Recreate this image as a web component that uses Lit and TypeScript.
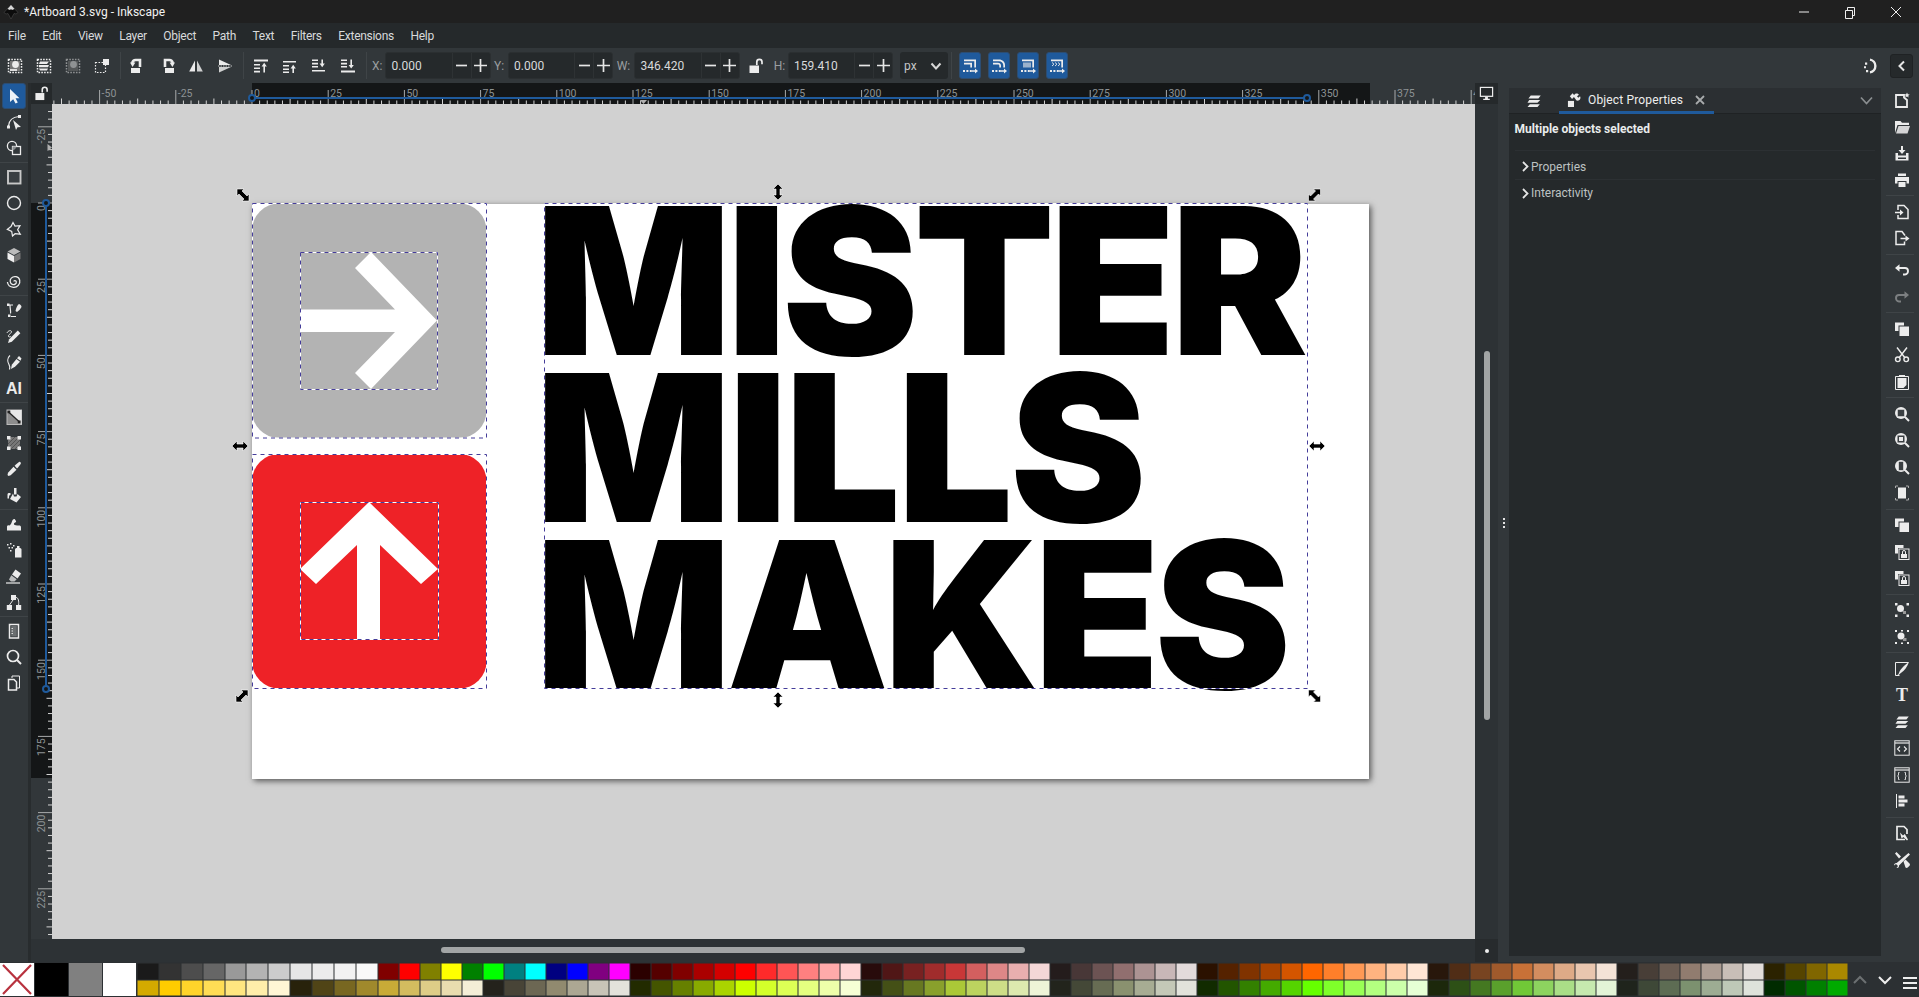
import { LitElement, html, css, svg } from "lit";
import { customElement } from "lit/decorators.js";

const dashBox = svg`<rect x="1.5" y="1.5" width="13" height="13" fill="none" stroke="currentColor" stroke-width="1.5" stroke-dasharray="1.6 1.2"/>`;

const ICONS: Record<string, unknown> = {
  selAll: svg`${dashBox}<rect x="3" y="3" width="10" height="10" fill="#777"/><circle cx="8.5" cy="6.5" r="3.4" fill="currentColor"/><path d="M3 11h7v2H3z" fill="#ddd"/>`,
  selLayers: svg`${dashBox}<path d="M4 3.5h9l-2 2.4H3zM3 7h10l-1 2.2H3zM3 10.4h9l-1 2.1H4z" fill="currentColor"/>`,
  deselect: svg`<g opacity=".5">${dashBox}<rect x="3" y="3" width="10" height="10" fill="#777"/><circle cx="8.5" cy="6.5" r="3.4" fill="currentColor"/></g>`,
  selSame: svg`<rect x="1.5" y="4.5" width="10" height="10" fill="none" stroke="currentColor" stroke-width="1.2" stroke-dasharray="1.6 1.4"/><rect x="9" y="1" width="6" height="6" fill="currentColor"/>`,
  rotL: svg`<path d="M1 10h9v5H1z" fill="currentColor"/><path d="M10 9V2H5.6C3.8 2 2.6 3.3 2.2 5" fill="none" stroke="currentColor" stroke-width="2.6"/><path d="M0 4.6h5.4L2.6 9z" fill="currentColor"/>`,
  rotR: svg`<path d="M6 10h9v5H6z" fill="currentColor"/><path d="M6 9V2h4.4c1.8 0 3 1.3 3.4 3" fill="none" stroke="currentColor" stroke-width="2.6"/><path d="M16 4.6h-5.4L13.4 9z" fill="currentColor"/>`,
  flipH: svg`<path d="M7 2.5v11H1.2z" fill="currentColor"/><path d="M9 2.5v11h5.8z" fill="currentColor" opacity=".85"/><path d="M8 0v16" stroke="#32373a" stroke-width=".8"/>`,
  flipV: svg`<path d="M2 1.5l12 5.5H2z" fill="currentColor"/><path d="M2 9h12L2 14.5z" fill="currentColor" opacity=".85"/><path d="M1 8h14" stroke="currentColor" stroke-width=".8" stroke-dasharray="1.5 1"/>`,
  raiseTop: svg`<path d="M1 1.5h14v2H1z" fill="currentColor"/><path d="M1 6h6v1.6H1zM1 9.4h6V11H1zM1 12.8h6v1.6H1z" fill="currentColor"/><path d="M11.2 14.5V7.5" stroke="currentColor" stroke-width="1.6"/><path d="M8.6 8.4l2.6-3.6 2.6 3.6z" fill="currentColor"/>`,
  raise: svg`<path d="M1 3h13v1.6H1zM1 7h6v1.6H1zM1 10.4h6V12H1zM1 13.4h6V15H1z" fill="currentColor"/><path d="M11.2 15V9.5" stroke="currentColor" stroke-width="1.6"/><path d="M8.6 10.4l2.6-3.6 2.6 3.6z" fill="currentColor"/>`,
  lower: svg`<path d="M1 1.5h6v1.6H1zM1 4.8h6v1.6H1zM1 8h6v1.6H1zM1 12h13v1.6H1z" fill="currentColor"/><path d="M11.2 1.5v5" stroke="currentColor" stroke-width="1.6"/><path d="M8.6 5.6l2.6 3.6 2.6-3.6z" fill="currentColor"/>`,
  lowerBot: svg`<path d="M1 1.5h6v1.6H1zM1 4.8h6v1.6H1zM1 8h6v1.6H1zM1 12.6h14v2H1z" fill="currentColor"/><path d="M11.2 1.5v6" stroke="currentColor" stroke-width="1.6"/><path d="M8.6 7l2.6 3.6L13.8 7z" fill="currentColor"/>`,
  lockOpen: svg`<path d="M1.5 7.5h9.5V15H1.5z" fill="currentColor"/><path d="M8.8 7V4a2.6 2.6 0 0 1 5.2 0v2.2" fill="none" stroke="currentColor" stroke-width="1.7"/>`,
  b1: svg`<path d="M2 1.500h12v8h-1.700V3.200H2zM2 4.800h8v4.700H8.300V6.500H2z" fill="currentColor"/><path d="M1 13h2M4.400 13h2M7.800 13h2" stroke="currentColor" stroke-width="1.800"/><path d="M10 12.200h3V10.400l3 2.600-3 2.600v-1.800h-3z" fill="currentColor"/>`,
  b2: svg`<path d="M2 1.500h6c3.500 0 6 2.400 6 5.500v2.500h-1.700V7.200c0-2.200-1.800-4-4.300-4H2zM2 4.800h5c1.800 0 3 1.200 3 2.800v1.900H8.300V7.800c0-.8-.6-1.300-1.300-1.300H2z" fill="currentColor"/><path d="M1 13h2M4.400 13h2M7.800 13h2" stroke="currentColor" stroke-width="1.800"/><path d="M10 12.200h3V10.400l3 2.600-3 2.600v-1.800h-3z" fill="currentColor"/>`,
  b3: svg`<path d="M2 1.500h12v8h-1.700V3.200H2z" fill="currentColor"/><path d="M3 4.500h8V9.500H3z" fill="currentColor" opacity=".6"/><path d="M1 13h2M4.400 13h2M7.800 13h2" stroke="currentColor" stroke-width="1.800"/><path d="M10 12.200h3V10.400l3 2.600-3 2.600v-1.800h-3z" fill="currentColor"/>`,
  b4: svg`<path d="M2 1.500h12v8h-1.700V3.200H2z" fill="currentColor"/><path d="M3 4.500l2 1.700L3 8M6 4.500l2 1.700L6 8M9 4.500l2 1.700L9 8" fill="none" stroke="currentColor" stroke-width=".9"/><path d="M1 13h2M4.400 13h2M7.800 13h2" stroke="currentColor" stroke-width="1.800"/><path d="M10 12.200h3V10.400l3 2.600-3 2.600v-1.800h-3z" fill="currentColor"/>`,
  snap: svg`<path d="M7 1.600A6.500 6.500 0 0 1 7 14.400" fill="none" stroke="currentColor" stroke-width="2.400"/><path d="M2 4.500h2.200v2.200H2zM1 8.300h2v2H1zM3 12h2.200v2.200H3z" fill="currentColor"/>`,
  monitor: svg`<rect x="1.500" y="1.500" width="13" height="9.500" fill="none" stroke="currentColor" stroke-width="1.300"/><path d="M6.500 11.500h3v2h-3zM4.500 13.500h7V15h-7z" fill="currentColor"/>`,
  xml: svg`<path d="M4 2.500h10L12 5.500H2zM3 7h11l-2.500 2.800H1.500zM4 11.200h10L12 14H2z" fill="currentColor" transform="skewX(-6) translate(1 0)"/>`,
  wrench: svg`<path d="M1 9.500h6.500V16H1z" fill="currentColor"/><path d="M3 4.500L6 1.400l1.500 1.800 1.400-1.300c1.500-.6 3-.1 3.800 1l-2 1.700 1.300 1.500 1.900-1.700c.8 1.300.5 3-.6 4-1 .9-2.100 1-3.200.7L7.400 5.400 5.400 7.400z" fill="currentColor"/>`,
  node: svg`<path d="M2.500 12C3 6 6 3 13 2.500" fill="none" stroke="currentColor" stroke-width="1.200"/><path d="M1 11.500h3v3H1zM12 1h3v3h-3z" fill="currentColor"/><path d="M7 6l8 7-3.500.2L10 16z" fill="currentColor"/>`,
  tweak: svg`<circle cx="6" cy="6" r="4.600" fill="none" stroke="currentColor" stroke-width="1.300"/><rect x="6.500" y="6.500" width="8" height="8" fill="#32373a" stroke="currentColor" stroke-width="1.300"/><path d="M6.500 6.500h3.800A4.500 4.500 0 0 1 6.500 10.300z" fill="#8a8d8f"/>`,
  rect: svg`<rect x="2" y="2" width="12.500" height="12.500" fill="#3a3f42" stroke="#c8c8c8" stroke-width="1.900"/>`,
  ellipse: svg`<circle cx="8" cy="8" r="6.500" fill="none" stroke="currentColor" stroke-width="1.400"/>`,
  star: svg`<path d="M7 1.500l2 3.600 5-.5-2.400 4.200 2.700 4.400-5.200-.5L6.500 15 5.700 10.500 1.300 8.300 5 5.500z" fill="none" stroke="currentColor" stroke-width="1.200"/>`,
  box: svg`<path d="M8 1L1.500 4.500 8 8l6.500-3.500z" fill="#bbb"/><path d="M1.500 5.500V12L8 15.500V9z" fill="#eee"/><path d="M14.500 5.500V12L8 15.500V9z" fill="#777"/>`,
  spiral: svg`<path d="M8 8.500c0-1.200 2-1.200 2.300.3.300 2-2 3.400-4 2.500-2.500-1-2.800-4.400-1-6.200 2.500-2.600 7.500-1.800 8.400 2 .9 4-2.500 7.500-6.300 7.200-3-.2-5.600-2.300-6-5.300" fill="none" stroke="currentColor" stroke-width="1.300"/>`,
  bezierBrush: svg`<path d="M2 3h5M4 3c0 4 1 6 .5 8.500" fill="none" stroke="currentColor" stroke-width="1.200"/><path d="M1 1.500h2.500V4H1zM2 12.500h2.500V15H2zM5 15h5v-1H5z" fill="currentColor"/><path d="M9.500 9c.5-3 2-6 3.500-7 1.500.5 2.500 1.800 2.500 3-1 2-3 4-4.500 5z" fill="currentColor"/>`,
  pencil: svg`<path d="M2 15l1.200-3.800L11.800 2.600l2.600 2.600-8.600 8.600z" fill="currentColor"/><path d="M1 5c1-2.500 4-3 4.500-1.500S1.500 7 2.500 8.500c.6.8 2 .3 2.500 0" fill="none" stroke="currentColor" stroke-width="1"/>`,
  pen: svg`<path d="M5 15l.8-4.300L10.500 5l3.500 2.800-5 5z" fill="currentColor"/><path d="M11 4.200L13 2l2.500 2.500-1 2.300z" fill="currentColor"/><path d="M4 1.500C1 4 1.500 8 3 10.500c1 1.800 1 3.500.5 5" fill="none" stroke="currentColor" stroke-width="1.200"/>`,
  gradient: svg`<rect x="1" y="1" width="14.500" height="14.500" fill="#8d8d8d" stroke="#bbb"/><path d="M1 1h14.500v14.500z" fill="#e8e8e8"/><path d="M2.500 3l11 10" stroke="#222" stroke-width="1.300"/><path d="M1.500 1.500h2.800v2.800H1.500zM11.800 11.500h2.800v2.800h-2.800z" fill="#222"/>`,
  mesh: svg`<rect x="2" y="2" width="12" height="12" fill="#777"/><path d="M2 5l3-3M2 9l7-7M2 13L13 2M5 14l9-9M9 14l5-5" stroke="#555" stroke-width="1"/><path d="M1 1h3.500v3.500H1zM11.500 1H15v3.500h-3.500zM1 11.500h3.500V15H1zM11.500 11.500H15V15h-3.500z" fill="currentColor"/>`,
  picker: svg`<path d="M2.500 15l-1-1 .5-2.200 5.500-6 3 3-5.800 5.500z" fill="currentColor"/><path d="M8.600 4.700l1-1L13 1c1-.6 2.400.8 1.700 2l-2.700 3.400-1 1z" fill="currentColor"/>`,
  bucket: svg`<path d="M8 1h2.500v6.500H8z" fill="currentColor"/><path d="M7 6.500l1 3h2.500l1-2.500 3.500 3-4.500 5.500L4 12zM1.500 7.500c0-1.500 1.500-1.800 3-1.500v2c-1.500-.2-1.500 1.500-1.500 3.500H1.500z" fill="currentColor"/>`,
  smudge: svg`<path d="M1 14.500V11c0-1 .5-2 2-1.500.8.300 2-1 2.800-3.500C6.500 3.500 8 2.500 9 3.500l1 1.500c.5.800-.5 1.300-1.300 1.700-1 .6-1.200 1.800 0 2.400 1.300.7 3 .4 4.300.4 1.300 0 2 .5 2 2v3z" fill="currentColor"/>`,
  spray: svg`<path d="M9 7.500c0-1 1-1.500 2-1.500V4h2.500v2c1 0 2 .5 2 1.500V15.500H9z" fill="currentColor"/><path d="M1 2h1.500v1.500H1zM4 1h1.500v1.500H4zM7 3h1.500v1.500H7zM2.500 5h1.500v1.500H2.500zM5.500 5h1.500v1.500H5.500zM4 8h1.500v1.500H4z" fill="currentColor"/>`,
  eraser: svg`<path d="M9.500 1.500l5.500 4-3.500 5-5.500-4z" fill="currentColor"/><path d="M5.300 7.200l5.400 4L8.500 13.500H5L3 11.500z" fill="currentColor" opacity=".75"/><path d="M0 15h14" stroke="currentColor" stroke-width="1.200"/>`,
  connector: svg`<path d="M5 1h5v5H5zM.8 11h5.200v5H.8zM10 11h5.200v5H10z" fill="currentColor"/><path d="M7 6L3.500 11M10 3.500c2.500 0 3 4 2.600 7.500" fill="none" stroke="currentColor" stroke-width="1"/>`,
  lpe: svg`<path d="M3.500 1.500h9v13.500h-9z" fill="none" stroke="currentColor" stroke-width="1.500"/><path d="M5.200 3h5.600v10.500H5.200z" fill="#6a6e70"/><path d="M5.500 5.500h1.500M5.500 8h1.500M5.500 10.500h1.500" stroke="#ddd"/>`,
  zoom: svg`<circle cx="7" cy="7" r="5.500" fill="none" stroke="currentColor" stroke-width="1.700"/><path d="M11 11l4 4" stroke="currentColor" stroke-width="2"/>`,
  pages: svg`<path d="M6 3V1h7.500v12H11" fill="none" stroke="currentColor" stroke-width="1"/><path d="M2.500 4.500H8l2.500 2.500V15h-8z" fill="none" stroke="currentColor" stroke-width="1.500"/>`,
  newdoc: svg`<path d="M2 3h8v2.500L13 8v7H2z" fill="none" stroke="currentColor" stroke-width="1.800"/><path d="M13 .5l.8 1.800 1.900.2-1.500 1.200.5 1.900-1.700-1-1.700 1 .5-1.900-1.500-1.200 1.900-.2z" fill="currentColor"/>`,
  open: svg`<path d="M1 2h5.500l1.500 1.800h7V6H3.500L1 14z" fill="currentColor"/><path d="M4.500 7H16l-2.500 7.500H2z" fill="currentColor" opacity=".88"/>`,
  save: svg`<path d="M7 1h2v4h2.500L8 9 4.500 5H7z" fill="currentColor"/><path d="M1.500 8H4v2.500h8V8h2.500v7.500h-13zM4 12.500h8V14H4z" fill="currentColor" fill-rule="evenodd"/>`,
  print: svg`<path d="M4 1.500h8V4H4zM1 5h14v6.500h-2.500V9h-9v2.500H1zM4.500 10h7v5h-7z" fill="currentColor"/>`,
  importDoc: svg`<path d="M4 6V1.500h6l4 4v9H4V11" fill="none" stroke="currentColor" stroke-width="1.500"/><path d="M1 7.800h5V5.500l3.500 3-3.500 3V9.200H1z" fill="currentColor"/>`,
  exportDoc: svg`<path d="M11 5.500L8 1.500H2v13h8.500v-3" fill="none" stroke="currentColor" stroke-width="1.500"/><path d="M6.500 7.800h5V5.500l4 3-4 3V9.200h-5z" fill="currentColor"/>`,
  undo: svg`<path d="M5 6h6c2.200 0 3 1.500 3 3s-.8 3.500-3 3.500H9" fill="none" stroke="currentColor" stroke-width="1.900"/><path d="M1 6l4.500-3.800v7.600z" fill="currentColor"/>`,
  redo: svg`<path d="M11 6H5C2.800 6 2 7.500 2 9s.8 3.500 3 3.500h2" fill="none" stroke="currentColor" stroke-width="1.900"/><path d="M15 6l-4.500-3.800v7.600z" fill="currentColor"/>`,
  dup: svg`<path d="M1 1.500h9v3H4.500V10H1z" fill="currentColor"/><path d="M5.500 5.500H15V15H5.500z" fill="currentColor"/>`,
  cut: svg`<circle cx="3.800" cy="12.300" r="2.300" fill="none" stroke="currentColor" stroke-width="1.400"/><circle cx="12.200" cy="12.300" r="2.300" fill="none" stroke="currentColor" stroke-width="1.400"/><path d="M3 .5l7.700 10M13 .5L5.300 10.500" stroke="currentColor" stroke-width="1.400"/>`,
  paste: svg`<path d="M1.500 2.500h13v13h-13z" fill="none" stroke="currentColor" stroke-width="1"/><path d="M5 1h6v2H5z" fill="currentColor"/><path d="M3.500 4h9v7l-3 3h-6z" fill="currentColor"/>`,
  zoomSel: svg`<circle cx="7" cy="7" r="6" fill="currentColor"/><rect x="3.500" y="3.500" width="7" height="7" fill="#3a3f42" stroke="currentColor" stroke-dasharray="1 1"/><path d="M11 11l4 4" stroke="currentColor" stroke-width="2"/>`,
  zoomDraw: svg`<circle cx="7" cy="7" r="6" fill="currentColor"/><rect x="3.500" y="3.500" width="7" height="7" fill="#3a3f42"/><rect x="5" y="5" width="4" height="4" fill="currentColor"/><path d="M11 11l4 4" stroke="currentColor" stroke-width="2"/>`,
  zoomPage: svg`<circle cx="7" cy="7" r="6" fill="currentColor"/><rect x="4.500" y="2.500" width="5" height="9" fill="#3a3f42" stroke="#eee" stroke-width=".6"/><path d="M11 11l4 4" stroke="currentColor" stroke-width="2"/>`,
  center: svg`<path d="M4 2.500h8V13.500H4z" fill="currentColor"/><path d="M1.500 3V1H4M12 1h2.500v2M1.500 13v2H4M12 15h2.500v-2" fill="none" stroke="#aaa" stroke-width="1"/>`,
  lockDup: svg`<path d="M1 1h8.500v3H4v5.500H1z" fill="currentColor"/><rect x="5" y="5" width="10" height="10.500" fill="none" stroke="currentColor" stroke-width="1"/><path d="M7 10h6v4H7z" fill="currentColor"/><path d="M8.500 10V8a1.500 1.500 0 0 1 3 0v2" fill="none" stroke="currentColor"/>`,
  group: svg`<path d="M1 1h2.500v2.500H1zM12.500 1H15v2.500h-2.500zM1 12.500h2.500V15H1zM12.500 12.500H15V15h-2.500z" fill="currentColor"/><circle cx="6.500" cy="6.500" r="3.500" fill="currentColor"/><path d="M9 9l3 0 0 3-3 0z" fill="#999"/>`,
  ungroup: svg`<path d="M1 1h2v2H1zM13 1h2v2h-2zM1 13h2v2H1zM13 13h2v2h-2zM7 1h2v1.500H7zM7 13.500h2V15H7z" fill="currentColor"/><circle cx="7" cy="7" r="3.500" fill="currentColor"/><path d="M9 9l3.500 0 0 3H9z" fill="#999"/>`,
  fill: svg`<path d="M1.500 1.500h13M1.500 1.500v13h4" fill="none" stroke="currentColor" stroke-width="1"/><path d="M5 12c1-3 4-7 10-11-2 5-4.500 8.500-7.500 10.500-1.500 1-2 2.500-5 3 1.500-.8 2-1.500 2.500-2.500z" fill="currentColor"/>`,
  text: svg`<text x="8" y="14" text-anchor="middle" font-family="Liberation Serif" font-weight="700" font-size="18" fill="currentColor">T</text>`,
  xmlEd: svg`<rect x=".8" y=".8" width="14.400" height="14.400" fill="none" stroke="currentColor" stroke-width="1"/><path d="M1 3h14" stroke="currentColor" stroke-width="1.200"/><path d="M6 6.500L3.500 9 6 11.500M10 6.500L12.500 9 10 11.500" fill="none" stroke="currentColor" stroke-width="1.100"/>`,
  css: svg`<rect x=".8" y=".8" width="14.400" height="14.400" fill="none" stroke="currentColor" stroke-width="1"/><path d="M1 3h14" stroke="currentColor" stroke-width="1.200"/><path d="M5.500 5.500h-1v2.800l-1 .7 1 .7v2.800h1M10.500 5.500h1v2.800l1 .7-1 .7v2.800h-1" fill="none" stroke="currentColor" stroke-width=".9"/>`,
  align: svg`<path d="M2.500 1v14" stroke="currentColor" stroke-width="1"/><path d="M4.500 2.500h6v3h-6zM4.500 6.500h9v3h-9zM4.500 10.500h6v3h-6z" fill="currentColor"/>`,
  docProps: svg`<path d="M11 14.500H3V1.500h7l3 3V9" fill="none" stroke="currentColor" stroke-width="1.700"/><path d="M6 7.500l3 3 1.800-1.600 3.200 5.500-1 1-3.500-3.500-2 1.500z" fill="currentColor"/>`,
  prefs: svg`<path d="M14.500 1L16 2.500 5 13.500c.3 1.400-1 2.700-2.500 2.500L4 14 2 12l-2 1.500C0 12 1.300 10.700 2.700 11z" fill="currentColor"/><path d="M1 1.500L2.500 0 7 4.500 5 6.500zM9.500 9.500l2-2 4 4c.6.800.6 1.600 0 2.200l-1.800 1.800c-.6.600-1.400.6-2.200 0z" fill="currentColor"/>`,
};

const ic = (n: string) => html`<svg class="ic" viewBox="0 0 16 16">${ICONS[n]}</svg>`;

const LEFT: string[][] = [
  ["select", "node", "tweak"],
  ["rect", "ellipse", "star", "box", "spiral"],
  ["bezierBrush", "pencil", "pen", "TXT"],
  ["gradient", "mesh", "picker", "bucket"],
  ["smudge", "spray", "eraser", "connector"],
  ["lpe", "zoom", "pages"],
];
const RIGHT: string[][] = [
  ["newdoc", "open", "save", "print"],
  ["importDoc", "exportDoc"],
  ["undo", "redo"],
  ["dup", "cut", "paste"],
  ["zoomSel", "zoomDraw", "zoomPage", "center"],
  ["dup", "lockDup", "lockDup"],
  ["group", "ungroup"],
  ["fill", "text", "xml", "xmlEd", "css", "align"],
  ["docProps", "prefs"],
];
const TOP: string[][] = [
  ["selAll", "selLayers", "deselect", "selSame"],
  ["rotL", "rotR", "flipH", "flipV"],
  ["raiseTop", "raise", "lower", "lowerBot"],
];

const TOPROW = "1a1a1a 333333 4d4d4d 666666 999999 b3b3b3 cccccc e6e6e6 ececec f2f2f2 f9f9f9 800000 ff0000 808000 ffff00 008000 00ff00 008080 00ffff 000080 0000ff 800080 ff00ff 2b0000 550000 800000 aa0000 d40000 ff0000 ff2a2a ff5555 ff8080 ffaaaa ffd5d5 280b0b 501616 782121 a02c2c c83737 d35f5f de8787 e9afaf f4d7d7 241c1c 483737 6c5353 916f6f ac9393 c8b7b7 e3dbdb 2b1100 552200 803300 aa4400 d45500 ff6600 ff7f2a ff9955 ffb380 ffccaa ffe6d5 28170b 502d16 784421 a05a2c c87137 d38d5f deaa87 e9c6af f4e3d7 241f1c 483e37 6c5d53 917c6f ac9d93 c8beb7 e3dedb 2b2200 554400 806600 aa8800".split(" ");
const BOTROW = "d4aa00 ffcc00 ffd42a ffdd55 ffe680 ffeeaa fff6d5 28220b 504416 786721 a0892c c8ab37 d3bc5f decd87 e9ddaf f4eed7 24221c 484437 6c6753 918a6f aca793 c8c4b7 e3e2db 222b00 445500 668000 88aa00 aad400 ccff00 d4ff2a ddff55 e5ff80 eeffaa f6ffd5 22280b 445016 677821 89a02c abc837 bcd35f cdde87 dde9af eef4d7 22241c 444837 676c53 8a916f a7ac93 c4c8b7 e2e3db 112b00 225500 338000 44aa00 55d400 66ff00 7fff2a 99ff55 b3ff80 ccffaa e6ffd5 1c280b 2d5016 447821 5aa02c 71c837 8dd35f aade87 c6e9af e3f4d7 1f241c 3e4837 5d6c53 7c916f 9dac93 bec8b7 dee3db 002b00 005500 008000 00aa00".split(" ");

const ORIGIN_X = 252, ORIGIN_Y = 203, PX = 3.048;
const range = (a: number, b: number) => { const r: number[] = []; for (let i = a; i <= b; i++) r.push(i); return r; };

const ARROW = "M-8 0L-3 -5V-2H3V-5L8 0L3 5V2H-3V5Z";
const DIAG = "M-6 -6H1L-1 -4L4 1L6 -1V6H-1L1 4L-4 -1L-6 1Z";

@customElement("app-root")
export class AppRoot extends LitElement {
  static styles = css`
    :host { display: block; width: 1919px; height: 997px; overflow: hidden; font-family: Roboto, "Noto Sans", sans-serif; font-size: 12px; color: #d4d7d8; background: #32373a; }
    .app { display: flex; flex-direction: column; height: 997px; }
    .ic { width: 16px; height: 16px; display: block; color: #ececec; flex: none; }
    .dim { opacity: .4; }

    .title { height: 23px; background: #202020; display: flex; align-items: center; color: #f2f2f2; flex: none; }
    .logo { width: 16px; height: 16px; margin: 0 5px 0 3px; flex: none; }
    .wc { margin-left: auto; display: flex; }
    .wc svg { width: 46px; height: 20px; display: block; }

    .menu { height: 25px; background: #25292b; display: flex; align-items: center; gap: 16.500px; padding-left: 8px; flex: none; color: #d8dadb; letter-spacing: -.28px; }

    .toolbar { height: 35px; background: #32373a; display: flex; align-items: center; flex: none; padding-left: .5px; }
    .tb { width: 29px; height: 27px; display: flex; align-items: center; justify-content: center; }
    .vsep { width: 7px; height: 27px; display: flex; justify-content: center; }
    .vsep::after { content: ""; width: 1px; background: #3f4447; }
    .lab { display: flex; justify-content: center; color: #9a9ea0; }
    .lx { width: 15.500px; } .ly { width: 17px; } .lw { width: 21px; } .lh { width: 16px; }
    .spin { width: 105.500px; height: 27px; background: #25292b; border: 1px solid #2b2f31; box-sizing: border-box; border-radius: 3px; display: flex; align-items: center; color: #d8dadb; padding-left: 5.500px; }
    .spin .val { flex: 1; }
    .spin .pm { width: 19px; height: 25px; display: flex; align-items: center; justify-content: center; border-left: 1px solid #2e3234; box-sizing: border-box; }
    .pm svg { width: 13px; height: 13px; display: block; }
    .lockbox { width: 32px; display: flex; justify-content: center; }
    .unit { width: 48px; height: 27px; margin-left: 7px; background: #25292b; border-radius: 3px; display: flex; align-items: center; justify-content: space-between; padding: 0 6px 0 4px; box-sizing: border-box; color: #c4c7c8; }
    .unit svg { width: 12px; height: 12px; display: block; }
    .blues { display: flex; gap: 7px; margin-left: 4px; }
    .blue { width: 22px; height: 27px; background: #1f5a9c; border: 1px solid #2c4d72; box-sizing: border-box; border-radius: 3px; display: flex; align-items: center; justify-content: center; }
    .tright { margin-left: auto; display: flex; align-items: center; gap: 11px; padding-right: 6px; }
    .chevbtn { width: 23px; height: 24px; background: #25292b; border: 1px solid #1f2224; box-sizing: border-box; border-radius: 3px; display: flex; align-items: center; justify-content: center; }
    .chevbtn svg { width: 12px; height: 12px; display: block; }

    .main { height: 879px; display: flex; flex: none; }
    .tools { width: 28px; flex: none; display: flex; flex-direction: column; background: #32373a; }
    .tbtn { height: 26px; display: flex; align-items: center; justify-content: center; flex: none; box-sizing: border-box; }
    .tbtn.on { background: #1f5a9c; border: 1px solid #2c4d72; border-radius: 3px; margin: 0 2px; }
    .tsep { height: 3px; flex: none; display: flex; align-items: center; }
    .tsep::after { content: ""; flex: 1; height: 1px; background: #3f4447; }
    .tdiv { width: 3px; flex: none; background: #282c2e; }

    .center { width: 1467px; flex: none; display: grid; grid-template-columns: 21px 1423px 23px; grid-template-rows: 21px 835px 23px; }
    .corner { background: #25292b; display: flex; align-items: center; justify-content: center; }
    .corner svg.ic { width: 15px; height: 15px; }
    .ruler { display: block; background: #32373a; }
    .canvas { position: relative; background: #d1d1d1; overflow: hidden; }
    .page { position: absolute; left: 200px; top: 100px; width: 1117px; height: 575px; background: #fff; box-shadow: 2px 2px 6px rgba(0,0,0,.6); }
    .art { position: absolute; inset: 0; display: block; }
    .vscroll { background: #2d3235; display: flex; flex-direction: column; align-items: center; padding-top: 247px; box-sizing: border-box; }
    .vscroll div { width: 6px; height: 369px; border-radius: 3px; background: #a2a5a5; }
    .hscroll { grid-column: 1 / 3; background: #2d3235; display: flex; padding: 8px 0 0 410px; box-sizing: border-box; }
    .hscroll div { width: 584px; height: 6px; border-radius: 3px; background: #a2a5a5; }
    .dot { background: #272b2d; display: flex; align-items: center; justify-content: center; }
    .dot::after { content: ""; width: 4px; height: 4px; border-radius: 50%; background: #eee; }

    .grip { width: 11px; flex: none; display: flex; flex-direction: column; align-items: center; justify-content: center; gap: 2px; }
    .grip i { width: 2px; height: 2px; background: #e2e2e2; display: block; }

    .panel { width: 372px; flex: none; margin: 5px 0 6px; background: #25292b; display: flex; flex-direction: column; }
    .tabs { height: 26px; background: #2b2f32; border-bottom: 1px solid #1f2224; box-sizing: border-box; display: flex; flex: none; }
    .tab0 { width: 50px; display: flex; align-items: center; justify-content: center; }
    .tab { width: 155px; box-sizing: border-box; border-bottom: 3px solid #1f5a9c; display: flex; align-items: center; color: #eee; padding-left: 8px; gap: 6px; height: 26px; letter-spacing: .15px; }
    .tab .ic { width: 15px; height: 15px; }
    .tab .x { width: 10px; height: 10px; margin-left: 6px; }
    .tabchev { margin-left: auto; margin-right: 8px; align-self: center; }
    .tabchev svg { width: 13px; height: 13px; display: block; }
    .pbody { padding: 0 6px; }
    .multi { font-weight: 700; color: #e9ecec; height: 37px; display: flex; align-items: center; margin-left: -.5px; box-sizing: border-box; padding-bottom: 7px; border-bottom: 1px solid #2c3033; }
    .expander { height: 29px; display: flex; align-items: center; gap: 1px; padding: 3px 0 0 6px; color: #bdc2c2; border-bottom: 1px solid #2c3033; box-sizing: border-box; }
    .expander + .expander { border-bottom: none; height: 26px; padding-top: 0; }
    .expander svg { width: 9px; height: 11px; display: block; }

    .rtools { width: 38px; flex: none; display: flex; flex-direction: column; padding-top: 4px; box-sizing: border-box; }
    .rbtn { height: 26.500px; flex: none; display: flex; align-items: center; justify-content: center; padding-left: 4px; }
    .rsep { height: 5.500px; flex: none; display: flex; align-items: center; padding: 0 5px; }
    .rsep::after { content: ""; flex: 1; height: 1px; background: #3f4447; }

    .palette { height: 35px; flex: none; display: flex; align-items: center; background: #2c3033; }
    .none { width: 34px; height: 33px; margin-right: 1px; display: block; flex: none; background: #fff; }
    .big { width: 33px; height: 33px; margin-right: 1px; flex: none; }
    .bk { background: #000; } .gy { background: #808080; } .wh { background: #fff; }
    .swatches { display: grid; grid-template-columns: repeat(11, 21.900px) repeat(70, 21px); grid-template-rows: 16.500px 16.500px; flex: none; }
    .sw { box-shadow: inset 0 0 0 .5px #2c3033; }
    .pctl { flex: 1; display: flex; align-items: center; padding-left: 5px; }
    .pctl svg { width: 14px; height: 14px; display: block; margin-right: 11px; }
    .pctl svg.ham { width: 16px; height: 16px; margin: 6px 0 0 -1px; }
  `;

  private rulerH() {
    const ticks = range(-26, 160).map((k) => {
      const x = ORIGIN_X + k * 2.5 * PX;
      const major = k % 10 === 0;
      const mid = k % 5 === 0;
      return svg`<path d="M${x} 104V${major ? 90 : mid ? 98.500 : 100.500}" stroke=${major ? "#a8abac" : "#d4d4d4"} stroke-width="1"/>`;
    });
    const labels = range(-2, 16).map((k) => {
      const x = ORIGIN_X + k * 25 * PX;
      return svg`<text x=${x + 2} y="97" font-size="10.500" fill="#8d9294" font-family="Roboto">${k * 25}</text>`;
    });
    const sx = 1307;
    return html`<svg class="ruler" width="1423" height="21" viewBox="52 83 1423 21">
      <rect x=${ORIGIN_X} y="83" width="1118" height="21" fill="#141617"/>
      ${labels}${ticks}
      <path d="M${ORIGIN_X} 98H${sx}" stroke="#1f5a9c" stroke-width="2"/>
      <circle cx=${ORIGIN_X} cy="98" r="3" fill="#141617" stroke="#1f5a9c" stroke-width="2"/>
      <circle cx=${sx} cy="98" r="3" fill="#141617" stroke="#1f5a9c" stroke-width="2"/>
      <path d="M640 100H647L643.500 104Z" fill="#b0b0b0"/>
    </svg>`;
  }

  private rulerV() {
    const ticks = range(-12, 96).map((k) => {
      const y = ORIGIN_Y + k * 2.5 * PX;
      const major = k % 10 === 0;
      const mid = k % 5 === 0;
      return svg`<path d="M52 ${y}H${major ? 38 : mid ? 46.500 : 48}" stroke=${major ? "#a8abac" : "#d4d4d4"} stroke-width="1"/>`;
    });
    const labels = range(-1, 9).map((k) => {
      const y = ORIGIN_Y + k * 25 * PX;
      return svg`<text transform="translate(45 ${y + 2}) rotate(-90)" text-anchor="end" font-size="10.500" fill="#8d9294" font-family="Roboto">${k * 25}</text>`;
    });
    return html`<svg class="ruler" width="21" height="835" viewBox="31 104 21 835">
      <rect x="31" y=${ORIGIN_Y} width="21" height="575" fill="#141617"/>
      ${labels}${ticks}
      <path d="M46 ${ORIGIN_Y}V689" stroke="#1f5a9c" stroke-width="2"/>
      <circle cx="46" cy=${ORIGIN_Y} r="3" fill="#141617" stroke="#1f5a9c" stroke-width="2"/>
      <circle cx="46" cy="689" r="3" fill="#141617" stroke="#1f5a9c" stroke-width="2"/>
      <path d="M47.500 144V151L52 147.500Z" fill="#b0b0b0"/>
    </svg>`;
  }

  private dashRect(x: number, y: number, w: number, h: number) {
    return svg`<rect x=${x} y=${y} width=${w} height=${h} fill="none" stroke="#fff" stroke-width="1"/><rect x=${x} y=${y} width=${w} height=${h} fill="none" stroke="#453d9a" stroke-width="1" stroke-dasharray="4 4"/>`;
  }

  private handle(x: number, y: number, kind: string) {
    const d = kind === "d1" || kind === "d2" ? DIAG : ARROW;
    const rot = kind === "v" ? 90 : kind === "d2" ? 90 : 0;
    return svg`<path transform="translate(${x} ${y}) rotate(${rot})" d=${d} fill="#000" stroke="#fff" stroke-width=".6"/>`;
  }

  private art() {
    return html`<svg class="art" viewBox="52 104 1423 835">
      <rect x="252" y="203.500" width="234.500" height="234.500" rx="27" fill="#b3b3b3"/>
      <rect x="252" y="454" width="234.500" height="234.500" rx="27" fill="#ee2227"/>
      <polygon fill="#fff" points="300,309.500 395,309.500 355,268 371,252 437,320.500 371,389 355,373 395,332 300,332"/>
      <polygon fill="#fff" points="369,502 438,569 421,584 380,545 380,639 357,639 357,545 316,584 300,569"/>
      <g font-family="Inter" font-weight="900" font-size="205" fill="#000">
        <text x="535.500" y="355" textLength="772.500" lengthAdjust="spacing">MISTER</text>
        <text x="535.500" y="522" textLength="611" lengthAdjust="spacing">MILLS</text>
        <text x="535.500" y="689" textLength="755.500" lengthAdjust="spacing">MAKES</text>
      </g>
      ${this.dashRect(252.500, 203.500, 234, 234.500)}
      ${this.dashRect(252.500, 454.500, 234, 234)}
      ${this.dashRect(300.500, 252.500, 137, 137)}
      ${this.dashRect(300.500, 502.500, 138, 137)}
      ${this.dashRect(544.500, 203.500, 763, 485)}
      ${this.handle(243, 195, "d1")}${this.handle(778, 192, "v")}${this.handle(1314.500, 195, "d2")}
      ${this.handle(240, 446, "h")}${this.handle(1317, 446, "h")}
      ${this.handle(242, 696, "d2")}${this.handle(778, 700, "v")}${this.handle(1314.500, 696, "d1")}
    </svg>`;
  }

  private spin(v: string) {
    return html`<div class="spin"><span class="val">${v}</span>
      <div class="pm"><svg viewBox="0 0 13 13"><path d="M1 6.500h11" stroke="#e6e6e6" stroke-width="1.700"/></svg></div>
      <div class="pm"><svg viewBox="0 0 13 13"><path d="M0 6.500h13M6.500 0v13" stroke="#e6e6e6" stroke-width="1.700"/></svg></div>
    </div>`;
  }

  render() {
    const selectIc = html`<svg class="ic" viewBox="0 0 16 16"><path d="M4 1v13l3.200-2.800L9.500 15.500 11.800 14.500 9.600 10.200H13.500Z" fill="#eef3f8"/></svg>`;
    return html`<div class="app">
      <div class="title">
        <svg class="logo" viewBox="0 0 16 16"><path d="M8 1L1 8.500l2 1.500 2-.5L8 15l3-5.500 2 .5 2-1.500z" fill="#0c0c0c" stroke="#555" stroke-width=".5"/><path d="M8 1L4.500 5 7 6l1-1 1 1 2.500-1z" fill="#d8d8d8"/></svg>
        <span>*Artboard 3.svg - Inkscape</span>
        <div class="wc">
          <svg viewBox="0 0 46 20"><path d="M18 10h10" stroke="#eee" stroke-width="1"/></svg>
          <svg viewBox="0 0 46 20"><path d="M18.500 8.500h7v8h-7zM20.500 8V5.500h7v8h-1.500" fill="none" stroke="#eee" stroke-width="1"/></svg>
          <svg viewBox="0 0 46 20"><path d="M18 5l10 10M28 5L18 15" stroke="#eee" stroke-width="1"/></svg>
        </div>
      </div>
      <div class="menu">${["File", "Edit", "View", "Layer", "Object", "Path", "Text", "Filters", "Extensions", "Help"].map((m) => html`<span>${m}</span>`)}</div>
      <div class="toolbar">
        ${TOP.map((g) => html`${g.map((n) => html`<div class="tb">${ic(n)}</div>`)}<div class="vsep"></div>`)}
        <span class="lab lx">X:</span>${this.spin("0.000")}
        <span class="lab ly">Y:</span>${this.spin("0.000")}
        <span class="lab lw">W:</span>${this.spin("346.420")}
        <div class="lockbox">${ic("lockOpen")}</div>
        <span class="lab lh">H:</span>${this.spin("159.410")}
        <div class="unit"><span>px</span><svg viewBox="0 0 12 12"><path d="M1.500 3.500L6 8.500l4.500-5" fill="none" stroke="#d8d8d8" stroke-width="2"/></svg></div>
        <div class="vsep"></div>
        <div class="blues">${["b1", "b2", "b3", "b4"].map((n) => html`<div class="blue">${ic(n)}</div>`)}</div>
        <div class="tright">${ic("snap")}<div class="chevbtn"><svg viewBox="0 0 12 12"><path d="M8 1.500L3.500 6 8 10.500" fill="none" stroke="#e6e6e6" stroke-width="2"/></svg></div></div>
      </div>
      <div class="main">
        <div class="tools">
          ${LEFT.map((g, i) => html`${i ? html`<div class="tsep"></div>` : ""}${g.map((n) =>
            n === "select" ? html`<div class="tbtn on">${selectIc}</div>`
            : n === "TXT" ? html`<div class="tbtn"><svg class="ic" viewBox="0 0 16 16"><text x="0" y="14" font-family="Liberation Sans" font-weight="700" font-size="16" fill="currentColor">AI</text></svg></div>`
            : html`<div class="tbtn">${ic(n)}</div>`)}`)}
        </div>
        <div class="tdiv"></div>
        <div class="center">
          <div class="corner">${ic("lockOpen")}</div>
          ${this.rulerH()}
          <div class="corner">${ic("monitor")}</div>
          ${this.rulerV()}
          <div class="canvas"><div class="page"></div>${this.art()}</div>
          <div class="vscroll"><div></div></div>
          <div class="hscroll"><div></div></div>
          <div class="dot"></div>
        </div>
        <div class="grip"><i></i><i></i><i></i></div>
        <div class="panel">
          <div class="tabs">
            <div class="tab0">${ic("xml")}</div>
            <div class="tab">${ic("wrench")}<span>Object Properties</span>
              <svg class="x" viewBox="0 0 10 10"><path d="M1 1l8 8M9 1L1 9" stroke="#a8abac" stroke-width="1.800"/></svg></div>
            <div class="tabchev"><svg viewBox="0 0 13 13"><path d="M1 3.500l5.500 6 5.500-6" fill="none" stroke="#8a8e90" stroke-width="1.700"/></svg></div>
          </div>
          <div class="pbody">
            <div class="multi">Multiple objects selected</div>
            <div class="expander"><svg viewBox="0 0 9 11"><path d="M2 1l4.500 4.500L2 10" fill="none" stroke="#e6e6e6" stroke-width="1.800"/></svg>Properties</div>
            <div class="expander"><svg viewBox="0 0 9 11"><path d="M2 1l4.500 4.500L2 10" fill="none" stroke="#e6e6e6" stroke-width="1.800"/></svg>Interactivity</div>
          </div>
        </div>
        <div class="rtools">
          ${RIGHT.map((g, i) => html`${i ? html`<div class="rsep"></div>` : ""}${g.map((n) => html`<div class="rbtn">${n === "redo" ? html`<svg class="ic dim" viewBox="0 0 16 16">${ICONS[n]}</svg>` : ic(n)}</div>`)}`)}
        </div>
      </div>
      <div class="palette">
        <svg class="none" viewBox="0 0 34 33"><path d="M3 2l28 29M31 2L3 31" stroke="#b8323e" stroke-width="2.200"/></svg>
        <div class="big bk"></div>
        <div class="big gy"></div>
        <div class="big wh"></div>
        <div class="swatches">
          ${[...TOPROW, ...BOTROW].map((c) => html`<div class="sw" style="background:#${c}"></div>`)}
        </div>
        <div class="pctl">
          <svg viewBox="0 0 14 14"><path d="M1 10l6-6 6 6" fill="none" stroke="#6c7072" stroke-width="2"/></svg>
          <svg viewBox="0 0 14 14"><path d="M1 4l6 6 6-6" fill="none" stroke="#eee" stroke-width="2"/></svg>
          <svg class="ham" viewBox="0 0 16 16"><path d="M1 3h14M1 8h14M1 13h14" stroke="#eee" stroke-width="2"/></svg>
        </div>
      </div>
    </div>`;
  }
}
